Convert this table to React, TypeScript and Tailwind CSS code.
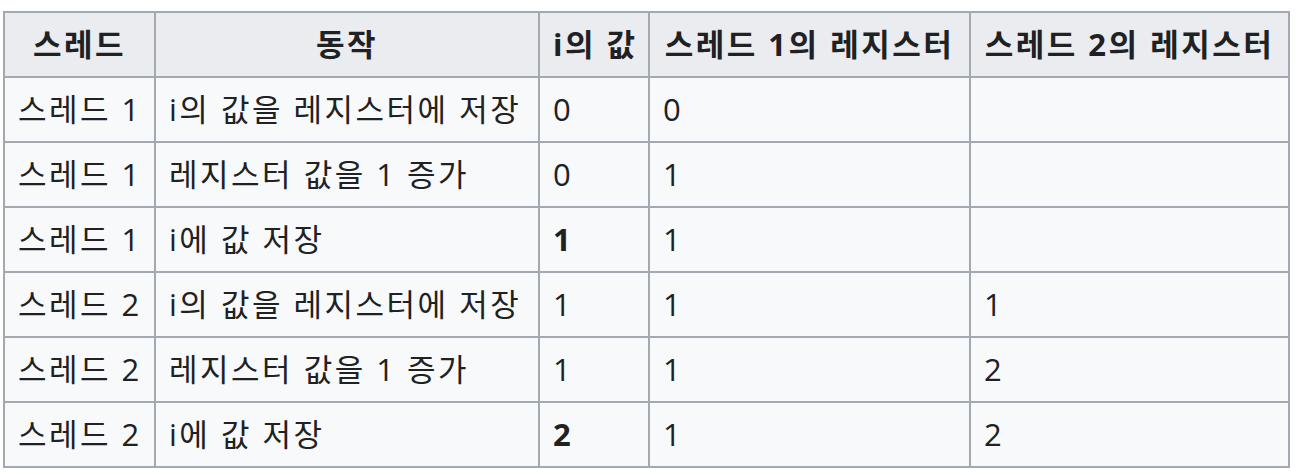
const rows: { thread: string; action: string; value: string; bold?: boolean; r1: string; r2: string }[] = [
  { thread: '스레드 1', action: 'i의 값을 레지스터에 저장', value: '0', r1: '0', r2: '' },
  { thread: '스레드 1', action: '레지스터 값을 1 증가', value: '0', r1: '1', r2: '' },
  { thread: '스레드 1', action: 'i에 값 저장', value: '1', bold: true, r1: '1', r2: '' },
  { thread: '스레드 2', action: 'i의 값을 레지스터에 저장', value: '1', r1: '1', r2: '1' },
  { thread: '스레드 2', action: '레지스터 값을 1 증가', value: '1', r1: '1', r2: '2' },
  { thread: '스레드 2', action: 'i에 값 저장', value: '2', bold: true, r1: '1', r2: '2' },
]

const th = 'border-2 border-[#a2a9b1] bg-[#eaecf0] px-[13px] py-[6px] text-center font-bold leading-[51px] whitespace-nowrap'
const td = 'border-2 border-[#a2a9b1] px-[13px] py-[6px] text-left leading-[51px] whitespace-nowrap'

export default function App() {
  return (
    <div className="min-h-screen bg-white pt-[11px] pl-[3px] font-['Open_Sans','Noto_Sans_CJK_KR',sans-serif] text-[31px] tracking-[2.5px] text-[#202122]">
      <table className="table-fixed border-collapse bg-[#f8f9fa] w-[1285px]">
        <colgroup>
          <col className="w-[151px]" />
          <col className="w-[384px]" />
          <col className="w-[110px]" />
          <col className="w-[321px]" />
          <col className="w-[319px]" />
        </colgroup>
        <thead>
          <tr>
            <th className={th}>스레드</th>
            <th className={th}>동작</th>
            <th className={th}>i의 값</th>
            <th className={th}>스레드 1의 레지스터</th>
            <th className={th}>스레드 2의 레지스터</th>
          </tr>
        </thead>
        <tbody>
          {rows.map((row, i) => (
            <tr key={i}>
              <td className={td}>{row.thread}</td>
              <td className={td}>{row.action}</td>
              <td className={td + (row.bold ? ' font-bold' : '')}>{row.value}</td>
              <td className={td}>{row.r1}</td>
              <td className={td}>{row.r2}</td>
            </tr>
          ))}
        </tbody>
      </table>
    </div>
  )
}
